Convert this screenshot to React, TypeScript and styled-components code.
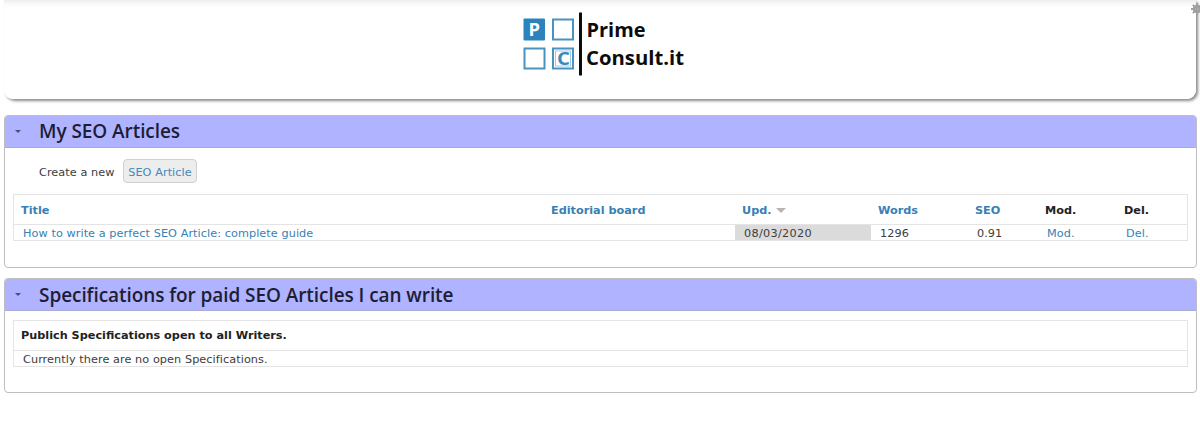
import React from "react";
import styled, { createGlobalStyle } from "styled-components";

const Global = createGlobalStyle`
  * { box-sizing: border-box; }
  body {
    margin: 0;
    height: 432px;
    overflow: hidden;
    background: #fff;
    color: #3c3c3c;
    font-family: "DejaVu Sans", Verdana, sans-serif;
    font-size: 11.25px;
    letter-spacing: 0.07px;
    line-height: 16px;
  }
`;

const Page = styled.div`
  position: relative;
  height: 432px;
  overflow: hidden;
`;

const Header = styled.header`
  display: flex;
  justify-content: center;
  height: 99px;
  margin: 0 4px 0 4px;
  padding-top: 9px;
  border-radius: 0 0 9px 9px;
  background: linear-gradient(#ededed, #fafafa 4px, #fff 8px);
  box-shadow: 2px 2px 3px 0 #8c8c8c;
`;

const Logo = styled.svg`
  display: block;
  width: 176px;
  height: 72px;
  letter-spacing: 0;
`;

const Gear = styled.svg`
  position: absolute;
  top: 3px;
  left: 1191px;
  width: 12px;
  height: 12px;
`;

const Panel = styled.section<{ $height: number; $gap: number }>`
  height: ${(p) => p.$height}px;
  margin: ${(p) => p.$gap}px 3px 0 4px;
  border: 1px solid #bdbdc2;
  border-radius: 4px;
  overflow: hidden;
`;

const PanelBar = styled.div`
  display: flex;
  align-items: center;
  height: 32px;
  padding-left: 10px;
  background: #b0b3ff;
  border-bottom: 1px solid #a9abd6;
`;

const Caret = styled.span<{ $size: number; $color: string }>`
  width: 0;
  height: 0;
  border: ${(p) => p.$size}px solid transparent;
  border-top-color: ${(p) => p.$color};
  border-bottom-width: 0;
`;

const PanelTitle = styled.h2<{ $lift: number }>`
  margin: 0 0 0 18px;
  padding-bottom: ${(p) => p.$lift}px;
  color: #1d1d35;
  font: 600 19px/28px "Open Sans", "Noto Sans", sans-serif;
  letter-spacing: -0.07px;
`;

const CreateRow = styled.div`
  display: flex;
  align-items: center;
  gap: 8px;
  height: 24px;
  margin: 11px 0 11px 34px;
`;

const CreateButton = styled.a`
  height: 24px;
  width: 74px;
  padding-top: 1px;
  text-align: center;
  line-height: 24px;
  color: #4488bd;
  background: #ededed;
  border: 1px solid #d0d0d0;
  border-radius: 4px;
`;

const CreateLabel = styled.span`
  width: 76px;
  line-height: 22px;
  padding-top: 3px;
`;

const Table = styled.div<{ $top?: number }>`
  margin: ${(p) => p.$top ?? 0}px 8px 0 8px;
  border: 1px solid #e4e4e4;
`;

const Row = styled.div<{ $head?: boolean }>`
  display: grid;
  grid-template-columns: 530px 191px 136px 97px 70px 79px 1fr;
  height: ${(p) => (p.$head ? 29 : 15)}px;
  line-height: 15px;
  font-weight: ${(p) => (p.$head ? 700 : 400)};
  letter-spacing: ${(p) => (p.$head ? 0 : 0.07)}px;
  color: ${(p) => (p.$head ? "#222" : "#3c3c3c")};
  border-bottom: ${(p) => (p.$head ? "1px solid #e4e4e4" : "0")};
  box-sizing: content-box;
  white-space: nowrap;
`;

const Cell = styled.div<{ $link?: boolean; $sorted?: boolean; $pad?: number; $wide?: boolean }>`
  display: flex;
  align-items: center;
  gap: 4px;
  height: 100%;
  padding-top: 1px;
  padding-left: ${(p) => p.$pad ?? 9}px;
  color: ${(p) => (p.$link ? "#387fb5" : "inherit")};
  background: ${(p) => (p.$sorted ? "#dbdbdb" : "transparent")};
  grid-column: ${(p) => (p.$wide ? "1 / -1" : "auto")};
`;

const CellText = styled.span<{ $raised?: boolean; $spacing?: number }>`
  height: 14px;
  line-height: ${(p) => (p.$raised ? 14 : 16)}px;
  letter-spacing: ${(p) => (p.$spacing === undefined ? "inherit" : `${p.$spacing}px`)};
`;

export default function App() {
  return (
    <>
      <Global />
      <Page>
        <Header>
          <Logo viewBox="0 0 176 72">
            <rect x="11.5" y="9.5" width="21.5" height="22" rx="1" fill="#2a83bb" />
            <g fill="none" stroke="#4a92bf" strokeWidth="2">
              <rect x="41" y="10.5" width="20" height="20" />
              <rect x="12.5" y="39.5" width="20" height="20" />
              <rect x="41" y="39.5" width="20" height="20" />
            </g>
            <rect x="43.5" y="42" width="15" height="15" fill="none" stroke="#a3c9e1" strokeWidth="1" />
            <g fontFamily="'Open Sans', sans-serif" fontWeight="700">
              <text x="16.5" y="26.5" fontSize="17" textLength="11.5" lengthAdjust="spacingAndGlyphs" fill="#fff">P</text>
              <text x="45" y="56" fontSize="18" textLength="13" lengthAdjust="spacingAndGlyphs" fill="#3989bd">C</text>
              <g fill="#0c0c0c" fontSize="20">
                <text x="74.5" y="28" textLength="59" lengthAdjust="spacingAndGlyphs">Prime</text>
                <text x="74" y="56" textLength="98" lengthAdjust="spacingAndGlyphs">Consult.it</text>
              </g>
            </g>
            <rect x="67" y="3.5" width="3" height="63" fill="#0c0c0c" />
          </Logo>
        </Header>
        <Gear viewBox="0 0 12 12">
          <circle cx="6" cy="6" r="2.8" fill="none" stroke="#a0a0a0" strokeWidth="3" />
          <path d="M6 0v3M6 9v3M0 6h3M9 6h3M1.8 1.8l2 2M8.2 8.2l2 2M1.8 10.2l2-2M8.2 3.8l2-2" stroke="#a0a0a0" strokeWidth="1.8" />
        </Gear>

        <Panel $height={153} $gap={16}>
          <PanelBar>
            <Caret $size={3.5} $color="#4b4c78" />
            <PanelTitle $lift={2}>My SEO Articles</PanelTitle>
          </PanelBar>
          <CreateRow>
            <CreateLabel>Create a new</CreateLabel>
            <CreateButton>SEO Article</CreateButton>
          </CreateRow>
          <Table>
            <Row $head>
              <Cell $link $pad={7}><CellText>Title</CellText></Cell>
              <Cell $link $pad={7}><CellText>Editorial board</CellText></Cell>
              <Cell $link $pad={7}>
                <CellText>Upd.</CellText>
                <Caret $size={5} $color="#b9b3b3" />
              </Cell>
              <Cell $link $pad={7}><CellText>Words</CellText></Cell>
              <Cell $link $pad={7}><CellText>SEO</CellText></Cell>
              <Cell $pad={7}><CellText>Mod.</CellText></Cell>
              <Cell $pad={7}><CellText>Del.</CellText></Cell>
            </Row>
            <Row>
              <Cell $link><CellText>How to write a perfect SEO Article: complete guide</CellText></Cell>
              <Cell />
              <Cell $sorted><CellText $spacing={0.3}>08/03/2020</CellText></Cell>
              <Cell><CellText>1296</CellText></Cell>
              <Cell><CellText>0.91</CellText></Cell>
              <Cell $link><CellText>Mod.</CellText></Cell>
              <Cell $link><CellText>Del.</CellText></Cell>
            </Row>
          </Table>
        </Panel>

        <Panel $height={115} $gap={10}>
          <PanelBar>
            <Caret $size={3.5} $color="#4b4c78" />
            <PanelTitle $lift={0}>Specifications for paid SEO Articles I can write</PanelTitle>
          </PanelBar>
          <Table $top={9}>
            <Row $head>
              <Cell $wide $pad={7}><CellText $raised>Publich Specifications open to all Writers.</CellText></Cell>
            </Row>
            <Row>
              <Cell $wide><CellText>Currently there are no open Specifications.</CellText></Cell>
            </Row>
          </Table>
        </Panel>
      </Page>
    </>
  );
}
